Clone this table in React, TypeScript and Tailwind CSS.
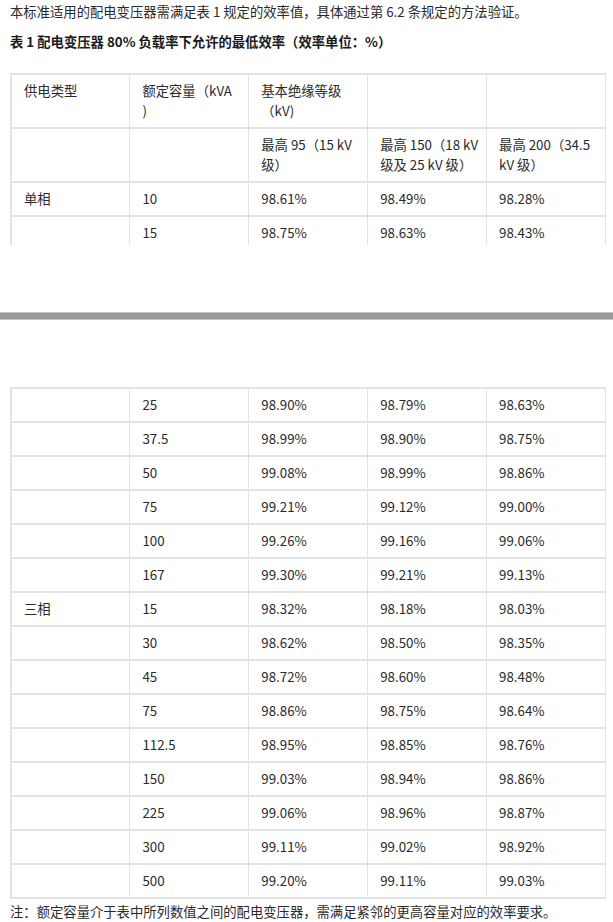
const cell = "border-x border-y-2 border-[#e3e3e6] px-3 pt-1.5 pb-1.5 align-top leading-5";

const lowerRows: string[][] = [
  ["", "25", "98.90%", "98.79%", "98.63%"],
  ["", "37.5", "98.99%", "98.90%", "98.75%"],
  ["", "50", "99.08%", "98.99%", "98.86%"],
  ["", "75", "99.21%", "99.12%", "99.00%"],
  ["", "100", "99.26%", "99.16%", "99.06%"],
  ["", "167", "99.30%", "99.21%", "99.13%"],
  ["三相", "15", "98.32%", "98.18%", "98.03%"],
  ["", "30", "98.62%", "98.50%", "98.35%"],
  ["", "45", "98.72%", "98.60%", "98.48%"],
  ["", "75", "98.86%", "98.75%", "98.64%"],
  ["", "112.5", "98.95%", "98.85%", "98.76%"],
  ["", "150", "99.03%", "98.94%", "98.86%"],
  ["", "225", "99.06%", "98.96%", "98.87%"],
  ["", "300", "99.11%", "99.02%", "98.92%"],
  ["", "500", "99.20%", "99.11%", "99.03%"],
];

function Row({ cells }: { cells: string[] }) {
  return (
    <tr>
      {cells.map((c, i) => (
        <td key={i} className={`${cell} ${i === 0 ? "border-l-2" : ""}`}>
          {c}
        </td>
      ))}
    </tr>
  );
}

// header text, broken where the reference breaks it
function Lines({ lines }: { lines: string[] }) {
  return (
    <>
      {lines.map((l, i) => (
        <span key={i} className="block whitespace-nowrap">
          {l}
        </span>
      ))}
    </>
  );
}

export default function App() {
  return (
    <div
      className="bg-white text-[13.33px] text-[#2a2a2a] min-h-[922px]"
      style={{ fontFamily: '"Noto Sans CJK SC", "Noto Sans", sans-serif' }}
    >
      <div className="pl-[10px] pr-[7px]">
        <p className="pt-[2px] leading-5">
          本标准适用的配电变压器需满足表 1 规定的效率值，具体通过第 6.2 条规定的方法验证。
        </p>
        <p className="mt-[10px] leading-5 font-bold text-[#1a1a1a]">
          表 1 配电变压器 80% 负载率下允许的最低效率（效率单位：%）
        </p>

        {/* first page of the table, cut at the page break */}
        <div className="mt-[21px] h-[172px] overflow-hidden">
          <table className="w-full table-fixed border-collapse">
            <tbody>
              <tr>
                <td className={`${cell} border-l-2`}>供电类型</td>
                <td className={cell}>
                  <Lines lines={["额定容量（kVA", ")"]} />
                </td>
                <td className={cell}>
                  <Lines lines={["基本绝缘等级", "（kV)"]} />
                </td>
                <td className={cell}></td>
                <td className={cell}></td>
              </tr>
              <tr>
                <td className={`${cell} border-l-2`}></td>
                <td className={cell}></td>
                <td className={cell}>
                  <Lines lines={["最高 95（15 kV", "级）"]} />
                </td>
                <td className={cell}>
                  <Lines lines={["最高 150（18 kV", "级及 25 kV 级）"]} />
                </td>
                <td className={cell}>
                  <Lines lines={["最高 200（34.5", "kV 级）"]} />
                </td>
              </tr>
              <Row cells={["单相", "10", "98.61%", "98.49%", "98.28%"]} />
              <Row cells={["", "15", "98.75%", "98.63%", "98.43%"]} />
              <Row cells={["", "", "", "", ""]} />
            </tbody>
          </table>
        </div>
      </div>

      {/* page separator */}
      <div className="mt-[67px] h-[8px] bg-[#9a9a9a] border-y border-[#c6c6c6]" />

      <div className="pl-[10px] pr-[7px]">
        <table className="mt-[67px] w-full table-fixed border-collapse">
          <tbody>
            {lowerRows.map((r, i) => (
              <Row key={i} cells={r} />
            ))}
          </tbody>
        </table>
        <p className="mt-[3px] leading-5">
          注：额定容量介于表中所列数值之间的配电变压器，需满足紧邻的更高容量对应的效率要求。
        </p>
      </div>
    </div>
  );
}
